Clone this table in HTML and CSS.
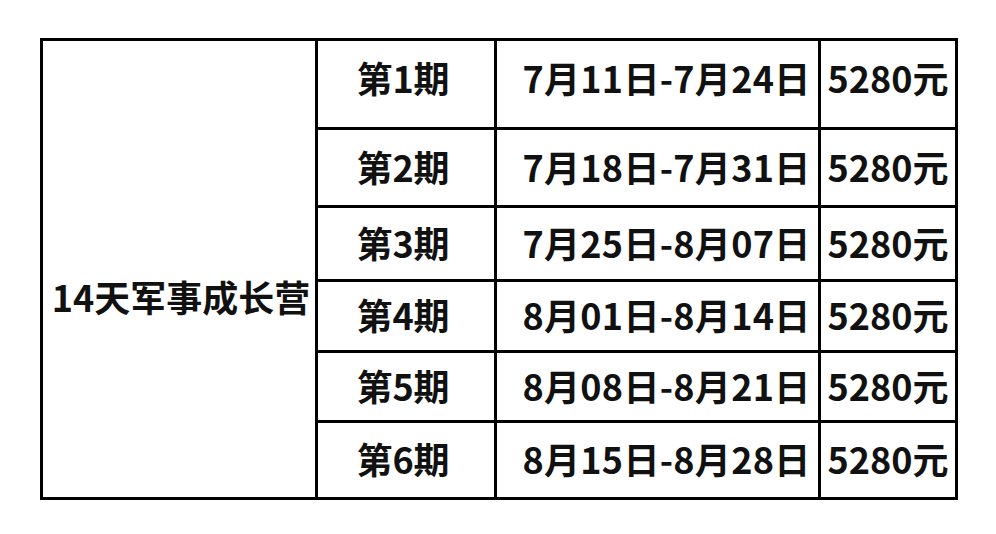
FILE: index.html
```html
<!DOCTYPE html>
<html lang="zh-CN">
<head>
<meta charset="utf-8">
<title>14天军事成长营</title>
<link rel="stylesheet" href="styles.css">
</head>
<body>
<div class="schedule">
  <div class="cell camp">14天军事成长营</div>
  <div class="cell term first">第1期</div>
  <div class="cell date first">7月11日-7月24日</div>
  <div class="cell price first">5280元</div>
  <div class="cell term">第2期</div>
  <div class="cell date">7月18日-7月31日</div>
  <div class="cell price">5280元</div>
  <div class="cell term">第3期</div>
  <div class="cell date">7月25日-8月07日</div>
  <div class="cell price">5280元</div>
  <div class="cell term">第4期</div>
  <div class="cell date">8月01日-8月14日</div>
  <div class="cell price">5280元</div>
  <div class="cell term">第5期</div>
  <div class="cell date">8月08日-8月21日</div>
  <div class="cell price">5280元</div>
  <div class="cell term">第6期</div>
  <div class="cell date">8月15日-8月28日</div>
  <div class="cell price">5280元</div>
</div>
</body>
</html>
```
FILE: styles.css
```css
html, body {
  margin: 0;
  padding: 0;
  background: #fff;
}
body {
  font-family: "Noto Sans CJK SC", "Noto Sans", sans-serif;
  font-weight: 700;
  color: #111;
}
.schedule {
  margin: 38px 0 0 40px;
  width: 918px;
  box-sizing: border-box;
  display: grid;
  grid-template-columns: 272px 176px 321px 134px;
  grid-template-rows: 86px 75px 71px 68px 67px 74px;
  gap: 3px;
  padding: 3px;
  background: #000;
}
.cell {
  background: #fff;
  display: flex;
  align-items: center;
  justify-content: center;
  font-size: 36px;
  line-height: 1;
  white-space: nowrap;
  padding-bottom: 4px;
}
.first {
  padding-bottom: 14px;
}
.camp {
  grid-column: 1;
  grid-row: 1 / 7;
  padding-top: 58px;
  padding-left: 4px;
}
.term {
  padding-right: 6px;
}
.date {
  padding-left: 18px;
  letter-spacing: 0.3px;
}
```
